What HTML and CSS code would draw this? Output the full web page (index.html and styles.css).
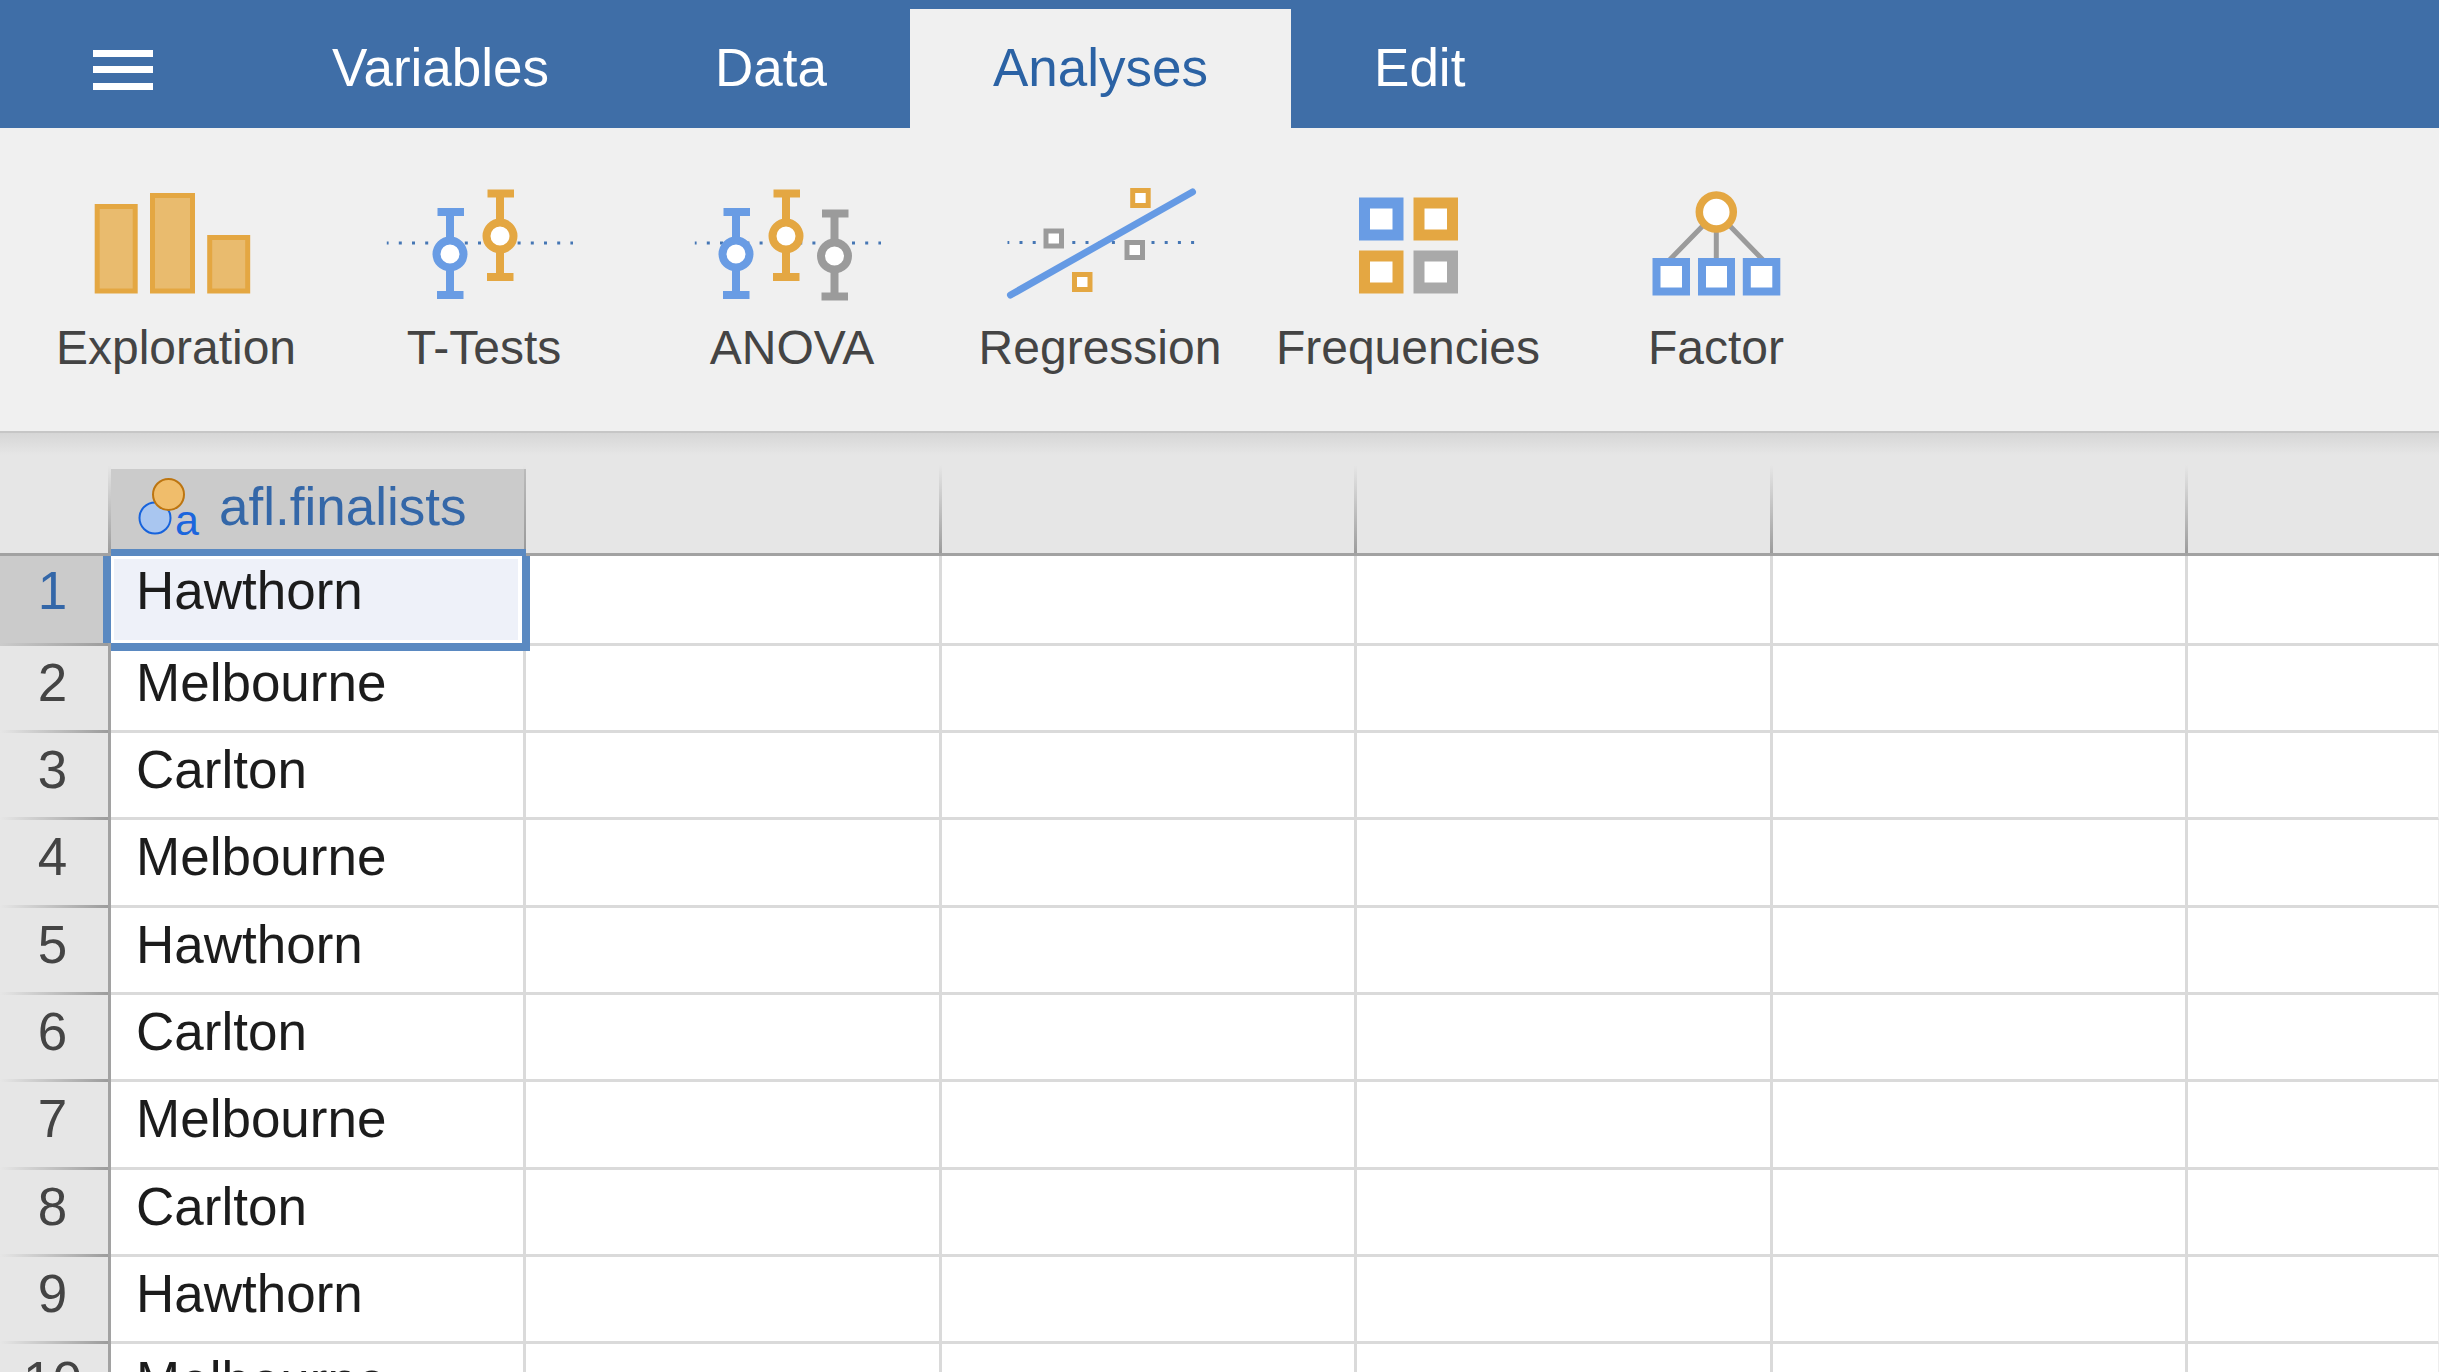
FILE: index.html
```html
<!DOCTYPE html>
<html lang="en">
<head>
<meta charset="utf-8">
<meta name="viewport" content="width=device-width, initial-scale=1">
<title>Data analysis</title>
<link rel="stylesheet" href="styles.css">
</head>
<body>
<header class="tabbar">
  <button class="menu" type="button" aria-label="Menu">
    <svg width="60" height="42" viewBox="0 0 60 42" fill="#fff"><path d="M0 1h60v7H0zM0 17h60v7H0zM0 34h60v7H0z"/></svg>
  </button>
  <nav class="tabs">
    <button class="tab" type="button">Variables</button>
    <button class="tab" type="button">Data</button>
    <button class="tab tab-active" type="button">Analyses</button>
    <button class="tab" type="button">Edit</button>
  </nav>
</header>

<div class="ribbon">
  <button class="tool" type="button">
    <svg class="tool-icon" viewBox="76 170 200 140" fill="#e9bb6e" stroke="#e4a742" stroke-width="5">
      <rect x="97.200" y="206.500" width="38" height="84.500"/>
      <rect x="152.500" y="195.500" width="40" height="95.500"/>
      <rect x="209.700" y="237.500" width="38" height="53.500"/>
    </svg>
    <span>Exploration</span>
  </button>
  <button class="tool" type="button">
    <svg class="tool-icon" viewBox="384 170 200 140">
      <path class="dots" d="M386.800 243H573"/>
      <g class="blue"><path d="M450 212V295M437.500 212h26.500M437 295h26.500"/><circle cx="450" cy="254" r="13.500"/></g>
      <g class="orange"><path d="M500 193.500V277M487.500 193.500h26.500M487 277h26.500"/><circle cx="500" cy="236" r="13.500"/></g>
    </svg>
    <span>T-Tests</span>
  </button>
  <button class="tool" type="button">
    <svg class="tool-icon" viewBox="692 170 200 140">
      <path class="dots" d="M694.800 243H881"/>
      <g class="blue"><path d="M736 212V295M723.500 212h26.500M723 295h26.500"/><circle cx="736" cy="254" r="13.500"/></g>
      <g class="orange"><path d="M786 193.500V277M773.500 193.500h26.500M773 277h26.500"/><circle cx="786" cy="236" r="13.500"/></g>
      <g class="gray"><path d="M834.500 213.500V296.500M822 213.500h26.500M821.500 296.500h26.500"/><circle cx="834.500" cy="256" r="13.500"/></g>
    </svg>
    <span>ANOVA</span>
  </button>
  <button class="tool" type="button">
    <svg class="tool-icon" viewBox="1000 170 200 140">
      <path class="dots" d="M1007.500 242.500H1196"/>
      <path d="M1010.500 295L1192.500 192" stroke="#659ae4" stroke-width="7" stroke-linecap="round"/>
      <g fill="#fff" stroke-width="5">
        <g stroke="#e4a742"><rect x="1132.700" y="190.500" width="15.500" height="15"/><rect x="1074.500" y="274.500" width="15.500" height="15"/></g>
        <g stroke="#9b9b9b"><rect x="1046" y="231" width="15.500" height="15"/><rect x="1127" y="242.500" width="15.500" height="15"/></g>
      </g>
    </svg>
    <span>Regression</span>
  </button>
  <button class="tool" type="button">
    <svg class="tool-icon" viewBox="1308 170 200 140" fill="#fff" stroke-width="11">
      <rect x="1364.500" y="203" width="33.500" height="32" stroke="#699ce4"/>
      <rect x="1419" y="203" width="33.500" height="32" stroke="#e4a742"/>
      <rect x="1364.500" y="256" width="33.500" height="32" stroke="#e4a742"/>
      <rect x="1419" y="256" width="33.500" height="32" stroke="#a9a9a9"/>
    </svg>
    <span>Frequencies</span>
  </button>
  <button class="tool" type="button">
    <svg class="tool-icon" viewBox="1616 170 200 140" fill="#fff">
      <path d="M1716.300 212L1669.500 260M1716.300 212V260M1716.300 212L1763 260" stroke="#9b9b9b" stroke-width="5"/>
      <circle cx="1716.300" cy="212" r="17" stroke="#e4a742" stroke-width="7.500"/>
      <g stroke="#699ce4" stroke-width="8"><rect x="1656.500" y="262" width="29.500" height="29.500"/><rect x="1702" y="262" width="29" height="29.500"/><rect x="1746.800" y="262" width="29.500" height="29.500"/></g>
    </svg>
    <span>Factor</span>
  </button>
</div>

<main class="sheet">
  <table class="grid">
    <colgroup><col class="col-index"><col class="col-a"><col class="col-b"><col class="col-a"><col class="col-b"><col class="col-a"><col></colgroup>
    <thead>
      <tr>
        <td></td>
        <th class="var-head" scope="col">
          <div class="var">
            <svg width="44" height="64" viewBox="137 478 44 64" overflow="visible">
              <circle cx="155" cy="522" r="15.500" fill="#a9c6f0" stroke="#1763dc" stroke-width="2"/>
              <circle cx="168.500" cy="498.500" r="15.500" fill="#f0bd6b" stroke="#bd7510" stroke-width="2"/>
              <text x="175" y="539" font-size="43" fill="#1c66dd">a</text>
            </svg>
            <span>afl.finalists</span>
          </div>
        </th>
        <td></td><td></td><td></td><td></td><td></td>
      </tr>
    </thead>
    <tbody>
      <tr class="current"><th scope="row">1</th><td class="selected">Hawthorn</td><td></td><td></td><td></td><td></td><td></td></tr>
      <tr><th scope="row">2</th><td>Melbourne</td><td></td><td></td><td></td><td></td><td></td></tr>
      <tr><th scope="row">3</th><td>Carlton</td><td></td><td></td><td></td><td></td><td></td></tr>
      <tr><th scope="row">4</th><td>Melbourne</td><td></td><td></td><td></td><td></td><td></td></tr>
      <tr><th scope="row">5</th><td>Hawthorn</td><td></td><td></td><td></td><td></td><td></td></tr>
      <tr><th scope="row">6</th><td>Carlton</td><td></td><td></td><td></td><td></td><td></td></tr>
      <tr><th scope="row">7</th><td>Melbourne</td><td></td><td></td><td></td><td></td><td></td></tr>
      <tr><th scope="row">8</th><td>Carlton</td><td></td><td></td><td></td><td></td><td></td></tr>
      <tr><th scope="row">9</th><td>Hawthorn</td><td></td><td></td><td></td><td></td><td></td></tr>
      <tr><th scope="row">10</th><td>Melbourne</td><td></td><td></td><td></td><td></td><td></td></tr>
    </tbody>
  </table>
</main>
</body>
</html>
```
FILE: styles.css
```css
* {
  box-sizing: border-box;
}

body {
  margin: 0;
  height: 100vh;
  display: flex;
  flex-direction: column;
  overflow: hidden;
  background: #fff;
  font-family: "Liberation Sans", Arial, sans-serif;
  font-size: 53px;
}

button {
  border: 0;
  margin: 0;
  background: none;
  font: inherit;
  white-space: nowrap;
}

/* Top tab bar */
.tabbar {
  display: flex;
  flex: none;
  padding-top: 9px;
  background: #3f6ea7;
}

.menu {
  display: flex;
  align-items: center;
  width: 249px;
  padding: 2px 0 0 93px;
}

.menu svg {
  flex: none;
}

.tabs {
  display: flex;
}

.tab {
  padding: 0 83px 2px;
  line-height: 117px;
  color: #fff;
}

.tab-active {
  background: #f0f0f0;
  color: #2b62a4;
}

/* Analysis ribbon */
.ribbon {
  display: flex;
  flex: none;
  padding: 42px 22px 56px;
  background: #f0f0f0;
  border-bottom: 2px solid #c6c6c6;
}

.tool {
  display: flex;
  flex-direction: column;
  align-items: center;
  gap: 11px;
  width: 308px;
  padding: 0;
  font-size: 48px;
  line-height: 54px;
  color: #444;
}

.tool-icon {
  width: 200px;
  height: 140px;
}

.dots {
  stroke: #4576b4;
  stroke-width: 3;
  stroke-dasharray: 3 10.200;
  stroke-dashoffset: -12;
}

.blue,
.orange,
.gray {
  fill: #fff;
  stroke-width: 8;
}

.blue {
  stroke: #699ce4;
}

.orange {
  stroke: #e4a742;
}

.gray {
  stroke: #9b9b9b;
}

/* Spreadsheet */
.sheet {
  flex: 1;
  min-height: 0;
  overflow: hidden;
}

.grid {
  width: 100%;
  table-layout: fixed;
  border-collapse: separate;
  border-spacing: 0;
  color: #1c1c1c;
}

.grid th,
.grid td {
  padding: 0;
  font-weight: normal;
  text-align: left;
  vertical-align: top;
}

.col-index {
  width: 111px;
}

.col-a {
  width: 415px;
}

.col-b {
  width: 416px;
}

.grid thead tr {
  background: linear-gradient(#d6d6d6, #e6e6e6 22px);
}

.grid thead th,
.grid thead td {
  height: 123px;
  border-bottom: 3px solid #a2a2a2;
  background: linear-gradient(transparent 32px, #9c9c9c) right / 3px 100% no-repeat;
}

.grid thead td:last-child {
  background: none;
}

.grid .var-head {
  padding-top: 36px;
}

.var {
  display: flex;
  align-items: center;
  gap: 38px;
  height: 84px;
  padding: 0 0 10px 26px;
  background: linear-gradient(#bbb, #999) right / 2px 100% no-repeat #cbcbcb;
  color: #3467a8;
}

.grid tbody th,
.grid tbody td {
  height: 87px;
  line-height: 74px;
}

.grid tbody td {
  padding-left: 25px;
  border-right: 3px solid #dadada;
  border-bottom: 3px solid #dadada;
}

.grid tbody td:last-child {
  border-right: 1px solid #eee;
}

.grid tbody th {
  padding-right: 3px;
  border-right: 3px solid #a2a2a2;
  background: linear-gradient(90deg, transparent, #9c9c9c) bottom / 100% 3px no-repeat #e6e6e6;
  color: #444;
  text-align: center;
}

.grid tbody tr:nth-child(3n + 4) > * {
  height: 88px;
}

.grid tbody .current > * {
  height: 90px;
  line-height: 70px;
}

.grid tbody .current th {
  background-color: #cbcbcb;
  color: #3467a8;
}

/* Active cell with its frame laid over the neighbouring rules */
.grid tbody .selected {
  position: relative;
  background: #eef1f9;
  box-shadow: inset 3px 3px #fff, inset -5px -3px #fff;
}

.selected::after {
  content: "";
  position: absolute;
  inset: -7px -7px -8px -8px;
  background:
    linear-gradient(#5a89c1, #5a89c1) 8px 0 / calc(100% - 12px) 7px no-repeat,
    linear-gradient(#5a89c1, #5a89c1) 0 7px / 8px calc(100% - 15px) no-repeat,
    linear-gradient(#5a89c1, #5a89c1) 8px 100% / calc(100% - 8px) 8px no-repeat,
    linear-gradient(#5a89c1, #5a89c1) 100% 7px / 8px calc(100% - 7px) no-repeat;
}
```
